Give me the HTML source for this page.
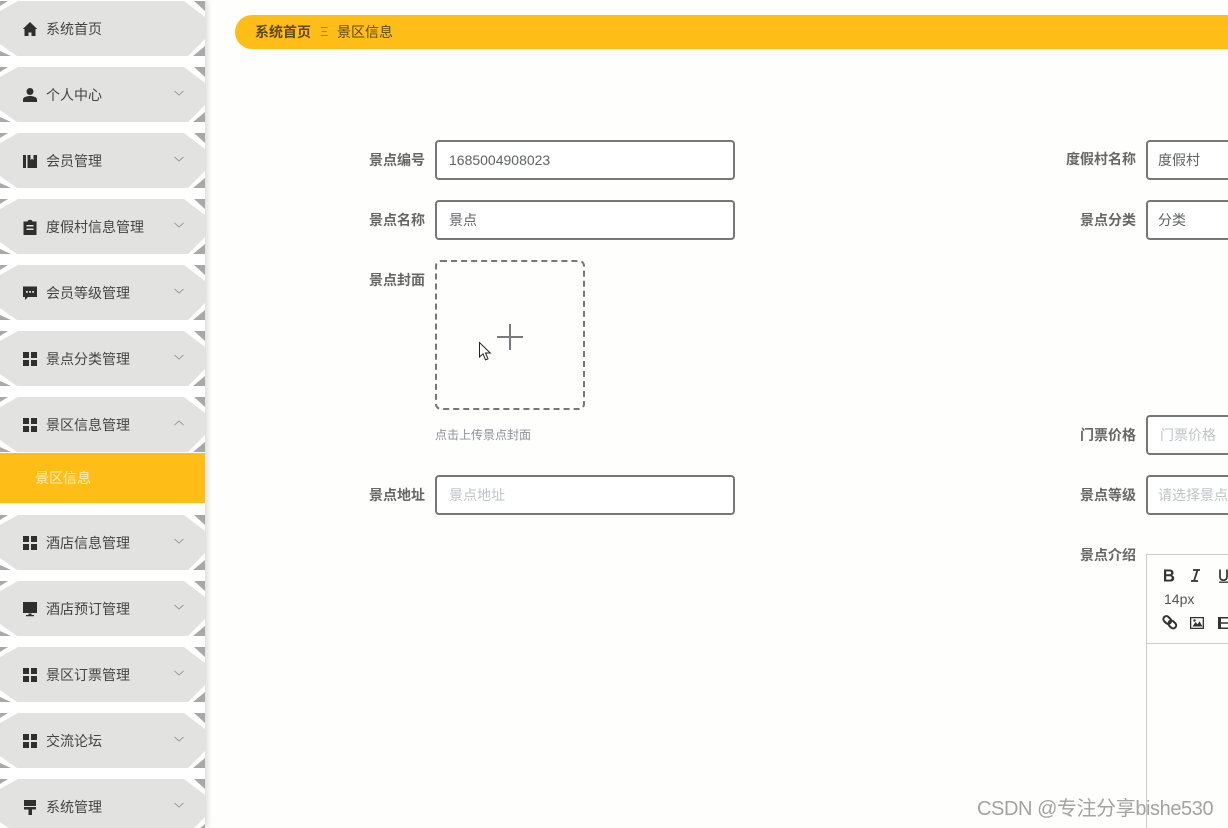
<!DOCTYPE html>
<html lang="zh-CN">
<head>
<meta charset="utf-8">
<style>
html,body{margin:0;padding:0;width:1228px;height:828px;overflow:hidden;background:#fefefc;font-family:"Liberation Sans","Noto Sans CJK SC",sans-serif;}
#page{position:relative;width:1228px;height:828px;overflow:hidden;background:#fefefc;}
#side{position:absolute;left:0;top:0;width:205px;height:828px;background:#fff;box-shadow:2px 0 6px rgba(0,0,0,.16);overflow:hidden;}
.it{position:absolute;left:0;width:205px;height:55px;overflow:hidden;}
.it svg.bg{position:absolute;left:0;top:0;}
.it svg.ic{position:absolute;left:22px;top:20px;width:16px;height:16px;}
.it svg.ar{position:absolute;left:173px;top:20px;width:12px;height:12px;}
.it span{position:absolute;left:46px;top:18px;font-size:14px;line-height:20px;color:#444;white-space:nowrap;}
#sub{position:absolute;left:0;top:453px;width:205px;height:50px;background:#ffbe17;color:#fdeeb5;font-size:14px;line-height:50px;text-indent:35px;}
#crumb{position:absolute;left:235px;top:15px;width:993px;height:34px;background:#ffbe17;border-radius:17px 0 0 17px;}
#crumb b,#crumb i,#crumb em{position:absolute;top:7px;font-size:14px;line-height:20px;font-style:normal;color:#5e4a1c;white-space:nowrap;}
.lb{position:absolute;font-size:14px;font-weight:700;line-height:20px;color:#666;white-space:nowrap;text-align:right;width:100px;}
.ip{position:absolute;height:36px;border:2px solid #777;border-radius:4px;background:#fff;font-size:14px;line-height:36px;color:#606266;white-space:nowrap;overflow:hidden;}
.ipr{left:1146px;border-right:none;border-radius:4px 0 0 4px;}
.ph{color:#bfc2c8;}
#wm{position:absolute;left:977px;top:797px;font-size:20px;line-height:24px;letter-spacing:-.42px;color:#a3a3a3;white-space:nowrap;}
</style>
</head>
<body>
<div id="page">
<svg width="0" height="0" style="position:absolute">
<defs>
<symbol id="oct" viewBox="0 0 205 55">
<polygon points="0,0 205,0 205,55 0,55" fill="#fff"/>
<polygon points="194,0 205,0 205,10" fill="#a9a9a9"/>
<polygon points="205,45 205,55 193,55" fill="#a9a9a9"/>
<polygon points="0,0 8,0 0,5" fill="#a9a9a9"/>
<polygon points="0,50 11,55 0,55" fill="#a9a9a9"/>
<polygon points="18,0 184,0 205,16 205,38 188,55 17,55 0,43 0,10" fill="#e2e2e1"/>
</symbol>
<symbol id="grid" viewBox="0 0 16 16"><path d="M1 1h6v6H1zM9 1h6v6H9zM1 9h6v6H1zM9 9h6v6H9z" fill="#2f2f2f"/></symbol>
<symbol id="chev" viewBox="0 0 12 12"><path d="M1.500 4l4.500 4 4.500-4" fill="none" stroke="#999" stroke-width="1"/></symbol>
<symbol id="chup" viewBox="0 0 12 12"><path d="M1.500 8l4.500-4 4.500 4" fill="none" stroke="#999" stroke-width="1"/></symbol>
</defs>
</svg>

<div id="side">
<div class="it" style="top:1px"><svg class="bg" width="205" height="55"><use href="#oct"/></svg>
<svg class="ic" viewBox="0 0 16 16"><path d="M8 1L.8 8H2.500v7H6.500v-3.500h3V15h4V8h1.700z" fill="#2f2f2f"/></svg><span>系统首页</span></div>

<div class="it" style="top:67px"><svg class="bg" width="205" height="55"><use href="#oct"/></svg>
<svg class="ic" viewBox="0 0 16 16"><circle cx="8" cy="4.500" r="3.500" fill="#2f2f2f"/><path d="M1 15v-2.500C1 10 5 9 8 9s7 1 7 3.500V15z" fill="#2f2f2f"/></svg><span>个人中心</span><svg class="ar"><use href="#chev"/></svg></div>

<div class="it" style="top:133px"><svg class="bg" width="205" height="55"><use href="#oct"/></svg>
<svg class="ic" viewBox="0 0 16 16"><path d="M1 2h3v13H1zM5.500 2h3v5l1.500-1.200L11.500 7V2H15v13H5.500z" fill="#2f2f2f"/></svg><span>会员管理</span><svg class="ar"><use href="#chev"/></svg></div>

<div class="it" style="top:199px"><svg class="bg" width="205" height="55"><use href="#oct"/></svg>
<svg class="ic" viewBox="0 0 16 16"><path fill-rule="evenodd" d="M1.500 2.500h4C5.700 1.500 6.700.8 8 .8s2.300.7 2.500 1.700h4V16h-13zM4.500 6v1.500h7V6zM4.500 9.500V11h7V9.500z" fill="#2f2f2f"/></svg><span>度假村信息管理</span><svg class="ar"><use href="#chev"/></svg></div>

<div class="it" style="top:265px"><svg class="bg" width="205" height="55"><use href="#oct"/></svg>
<svg class="ic" viewBox="0 0 16 16"><path fill-rule="evenodd" d="M1 1.500h14v10.500H6l-3 3v-3H1zM4 6v1.800h1.800V6zM7.100 6v1.800h1.800V6zM10.200 6v1.800H12V6z" fill="#2f2f2f"/></svg><span>会员等级管理</span><svg class="ar"><use href="#chev"/></svg></div>

<div class="it" style="top:331px"><svg class="bg" width="205" height="55"><use href="#oct"/></svg>
<svg class="ic"><use href="#grid"/></svg><span>景点分类管理</span><svg class="ar"><use href="#chev"/></svg></div>

<div class="it" style="top:397px"><svg class="bg" width="205" height="55"><use href="#oct"/></svg>
<svg class="ic"><use href="#grid"/></svg><span>景区信息管理</span><svg class="ar"><use href="#chup"/></svg></div>

<div id="sub">景区信息</div>

<div class="it" style="top:515px"><svg class="bg" width="205" height="55"><use href="#oct"/></svg>
<svg class="ic"><use href="#grid"/></svg><span>酒店信息管理</span><svg class="ar"><use href="#chev"/></svg></div>

<div class="it" style="top:581px"><svg class="bg" width="205" height="55"><use href="#oct"/></svg>
<svg class="ic" viewBox="0 0 16 16"><path d="M1 1h14v11H1zM6.500 12.500h3V14H12v1.200H4V14h2.500z" fill="#2f2f2f"/></svg><span>酒店预订管理</span><svg class="ar"><use href="#chev"/></svg></div>

<div class="it" style="top:647px"><svg class="bg" width="205" height="55"><use href="#oct"/></svg>
<svg class="ic"><use href="#grid"/></svg><span>景区订票管理</span><svg class="ar"><use href="#chev"/></svg></div>

<div class="it" style="top:713px"><svg class="bg" width="205" height="55"><use href="#oct"/></svg>
<svg class="ic"><use href="#grid"/></svg><span>交流论坛</span><svg class="ar"><use href="#chev"/></svg></div>

<div class="it" style="top:779px;height:49px"><svg class="bg" width="205" height="49" viewBox="0 0 205 49"><use href="#oct" width="205" height="55"/></svg>
<svg class="ic" viewBox="0 0 16 16"><path d="M2 1h12v6H2zM2 8h12v2.500H10V16H6.500v-5.500H2z" fill="#2f2f2f"/></svg><span>系统管理</span><svg class="ar"><use href="#chev"/></svg></div>
</div>

<div id="crumb">
<b style="left:20px">系统首页</b>
<i style="left:85px;font-size:13px;color:#a58235;">Ξ</i>
<em style="left:102px">景区信息</em>
</div>

<!-- left column -->
<div class="lb" style="left:325px;top:150px">景点编号</div>
<div class="ip" style="left:435px;top:140px;width:284px;padding-left:12px">1685004908023</div>
<div class="lb" style="left:325px;top:210px">景点名称</div>
<div class="ip" style="left:435px;top:200px;width:284px;padding-left:12px">景点</div>
<div class="lb" style="left:325px;top:270px">景点封面</div>
<div style="position:absolute;left:435px;top:260px;width:146px;height:146px;border:2px dashed #777;border-radius:6px;"></div>
<svg style="position:absolute;left:496px;top:323px" width="28" height="28" viewBox="0 0 28 28"><path d="M14 1v26M1 14h26" stroke="#7b7b7f" stroke-width="2" fill="none"/></svg>
<svg style="position:absolute;left:478px;top:341px" width="15" height="21" viewBox="0 0 15 21"><path d="M1.500 1.500V16l3.500-3.200 2.500 6 2.500-1-2.500-5.800h4.800z" fill="#fff" stroke="#222" stroke-width="1"/></svg>
<div style="position:absolute;left:435px;top:427px;font-size:12px;line-height:17px;color:#8b929c;white-space:nowrap;">点击上传景点封面</div>
<div class="lb" style="left:325px;top:485px">景点地址</div>
<div class="ip ph" style="left:435px;top:475px;width:284px;padding-left:12px">景点地址</div>

<!-- right column -->
<div class="lb" style="left:1036px;top:149px">度假村名称</div>
<div class="ip ipr" style="top:140px;width:70px;padding-left:10px">度假村</div>
<div class="lb" style="left:1036px;top:210px">景点分类</div>
<div class="ip ipr" style="top:200px;width:70px;padding-left:10px">分类</div>
<div class="lb" style="left:1036px;top:425px">门票价格</div>
<div class="ip ipr ph" style="top:415px;width:68px;padding-left:12px">门票价格</div>
<div class="lb" style="left:1036px;top:485px">景点等级</div>
<div class="ip ipr ph" style="top:475px;width:70px;padding-left:10px">请选择景点等级</div>
<div class="lb" style="left:1036px;top:545px">景点介绍</div>

<!-- editor -->
<div style="position:absolute;left:1146px;top:554px;width:81px;height:273px;border-left:1px solid #ccc;border-top:1px solid #ccc;background:#fefefc;">
<div style="position:absolute;left:0;top:88px;width:81px;height:1px;background:#ccc;"></div>
</div>
<svg style="position:absolute;left:1160px;top:566px" width="68" height="68" viewBox="0 0 68 68">
<path d="M4 3.500h5.500c2.600 0 4 1.200 4 3.200 0 1.200-.6 2.100-1.700 2.500 1.500.4 2.400 1.500 2.400 3 0 2.200-1.600 3.300-4.200 3.300H4zM6.200 5.400v2.900h3c1.300 0 2-.5 2-1.500s-.7-1.400-2-1.400zM6.200 10.200v3.400h3.400c1.400 0 2.100-.6 2.100-1.700s-.7-1.700-2.100-1.700z" fill="#333" fill-rule="evenodd"/>
<path d="M33 4h7M31 15h7M37.500 4l-3.500 11" fill="none" stroke="#333" stroke-width="1.800"/>
<path d="M60 3.500v7.300c0 2.200 1.500 3.400 3.500 3.400s3.500-1.200 3.500-3.400V3.500" fill="none" stroke="#333" stroke-width="1.700"/><path d="M59 16.200h9" stroke="#333" stroke-width="1.300"/>
<rect x="3" y="51" width="8.500" height="6" rx="3" transform="rotate(45 7.250 54)" fill="none" stroke="#333" stroke-width="2"/>
<rect x="8" y="55.500" width="8.500" height="6" rx="3" transform="rotate(45 12.250 58.500)" fill="none" stroke="#333" stroke-width="2"/>
<path fill-rule="evenodd" d="M30 51h14v12H30zM31.300 52.300v9.400h11.400v-9.400z" fill="#333"/><path d="M32.500 60.500l3-4.500 2 2.300 2-3 3 5.200z" fill="#333"/><circle cx="34.500" cy="54.500" r="1.200" fill="#333"/>
<path fill-rule="evenodd" d="M58 51h10v12H58zM61 52.500v3.700h7v-3.700zM61 57.800v3.700h7v-3.700z" fill="#333"/>
</svg>
<div style="position:absolute;left:1164px;top:590px;font-size:14px;line-height:18px;color:#555;">14px</div>

<div id="wm">CSDN @专注分享bishe530</div>
</div>
</body>
</html>
